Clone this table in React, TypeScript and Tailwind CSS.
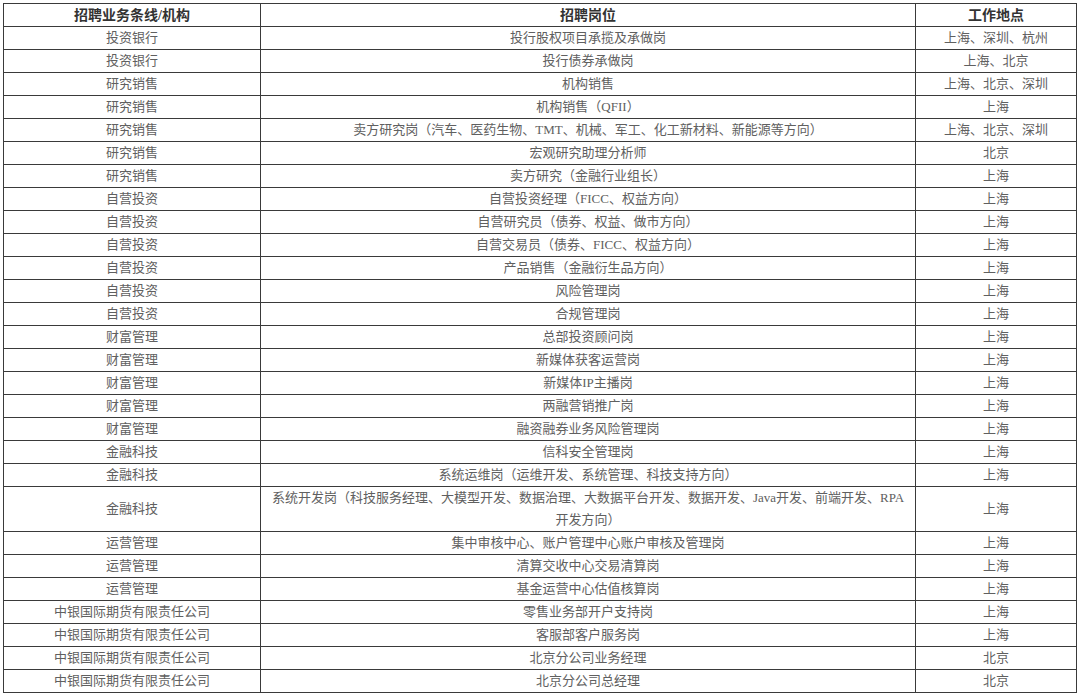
const rows: [string, string, string][] = [
  ["投资银行", "投行股权项目承揽及承做岗", "上海、深圳、杭州"],
  ["投资银行", "投行债券承做岗", "上海、北京"],
  ["研究销售", "机构销售", "上海、北京、深圳"],
  ["研究销售", "机构销售（QFII）", "上海"],
  ["研究销售", "卖方研究岗（汽车、医药生物、TMT、机械、军工、化工新材料、新能源等方向）", "上海、北京、深圳"],
  ["研究销售", "宏观研究助理分析师", "北京"],
  ["研究销售", "卖方研究（金融行业组长）", "上海"],
  ["自营投资", "自营投资经理（FICC、权益方向）", "上海"],
  ["自营投资", "自营研究员（债券、权益、做市方向）", "上海"],
  ["自营投资", "自营交易员（债券、FICC、权益方向）", "上海"],
  ["自营投资", "产品销售（金融衍生品方向）", "上海"],
  ["自营投资", "风险管理岗", "上海"],
  ["自营投资", "合规管理岗", "上海"],
  ["财富管理", "总部投资顾问岗", "上海"],
  ["财富管理", "新媒体获客运营岗", "上海"],
  ["财富管理", "新媒体IP主播岗", "上海"],
  ["财富管理", "两融营销推广岗", "上海"],
  ["财富管理", "融资融券业务风险管理岗", "上海"],
  ["金融科技", "信科安全管理岗", "上海"],
  ["金融科技", "系统运维岗（运维开发、系统管理、科技支持方向）", "上海"],
  ["金融科技", "__multi__", "上海"],
  ["运营管理", "集中审核中心、账户管理中心账户审核及管理岗", "上海"],
  ["运营管理", "清算交收中心交易清算岗", "上海"],
  ["运营管理", "基金运营中心估值核算岗", "上海"],
  ["中银国际期货有限责任公司", "零售业务部开户支持岗", "上海"],
  ["中银国际期货有限责任公司", "客服部客户服务岗", "上海"],
  ["中银国际期货有限责任公司", "北京分公司业务经理", "北京"],
  ["中银国际期货有限责任公司", "北京分公司总经理", "北京"],
];

const cell = "border border-[#3a3a3a] p-0 text-center align-middle";

export default function App() {
  return (
    <div
      className="w-[1080px] h-[696px] bg-white pt-[3px] pl-[3px] overflow-hidden"
      style={{ fontFamily: '"Liberation Serif", "Noto Sans CJK SC", serif' }}
    >
      <table className="table-fixed border-collapse w-[1073px] text-[13px] text-[#606060]">
        <colgroup>
          <col className="w-[257px]" />
          <col className="w-[655px]" />
          <col className="w-[161px]" />
        </colgroup>
        <thead>
          <tr className="h-[23px] text-[14px] font-bold text-[#333]">
            <th className={cell}>招聘业务条线/机构</th>
            <th className={cell}>招聘岗位</th>
            <th className={cell}>工作地点</th>
          </tr>
        </thead>
        <tbody>
          {rows.map(([line, job, place], i) =>
            job === "__multi__" ? (
              <tr key={i} className="h-[45px]">
                <td className={`${cell} leading-[22px]`}>{line}</td>
                <td className={`${cell} px-[10px] leading-[22px]`}>
                  系统开发岗（科技服务经理、大模型开发、数据治理、大数据平台开发、数据开发、Java开发、前端开发、RPA
                  <br />
                  开发方向）
                </td>
                <td className={`${cell} leading-[22px]`}>{place}</td>
              </tr>
            ) : (
              <tr key={i} className="h-[23px]">
                <td className={`${cell} leading-[22px]`}>{line}</td>
                <td className={`${cell} leading-[22px]`}>{job}</td>
                <td className={`${cell} leading-[22px]`}>{place}</td>
              </tr>
            )
          )}
        </tbody>
      </table>
    </div>
  );
}
